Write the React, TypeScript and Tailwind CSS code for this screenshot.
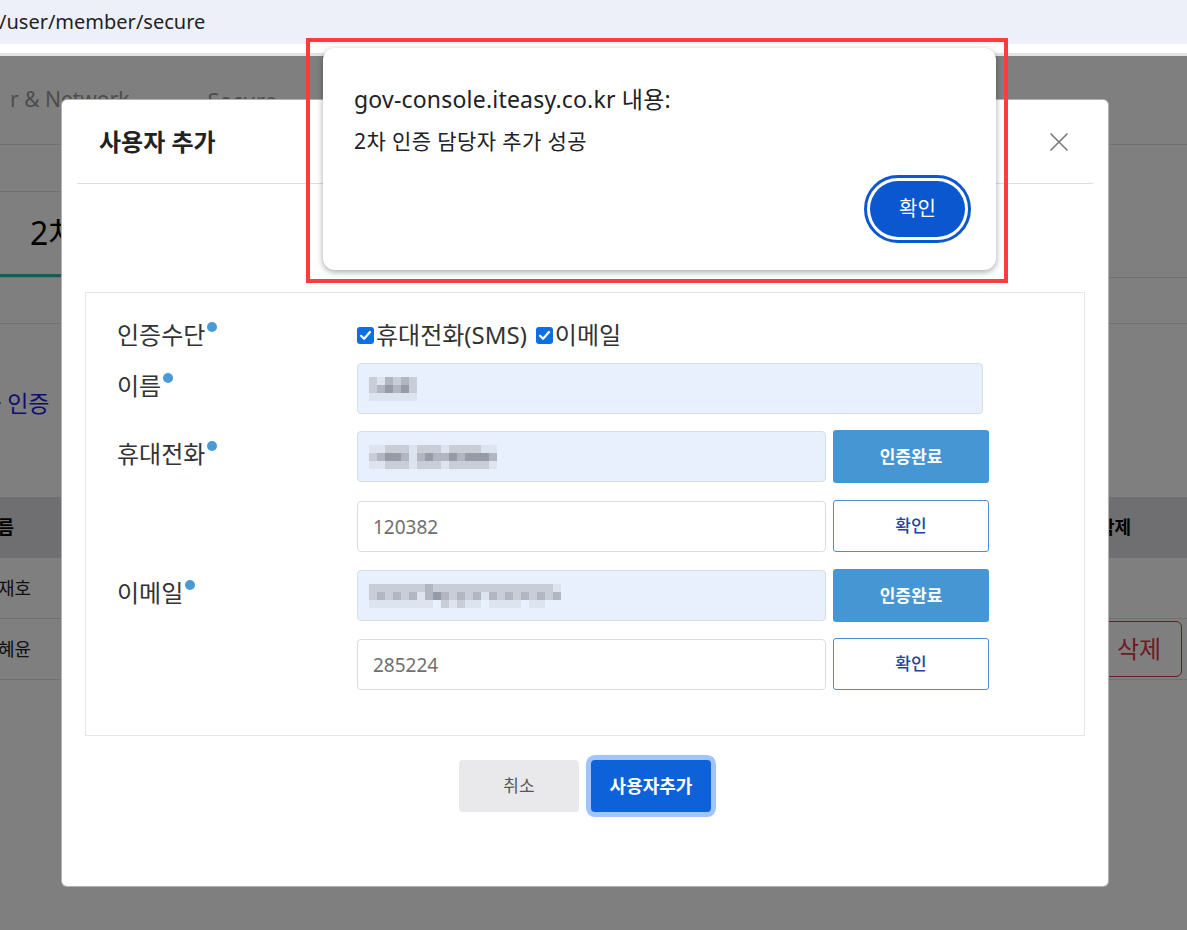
import React from "react";

const shade: Record<string, string> = {
  a: "bg-[#dde3ef]",
  b: "bg-[#c9cdd8]",
  c: "bg-[#b2b6c2]",
  d: "bg-[#979ba7]",
  " ": "bg-transparent",
};

// pixelated (censored) text in the filled fields
function Mosaic({ rows, cell = 8 }: { rows: string[]; cell?: number }) {
  return (
    <div className="flex flex-col">
      {rows.map((row, i) => (
        <div key={i} className="flex">
          {row.split("").map((ch, j) => (
            <div
              key={j}
              className={shade[ch]}
              style={{ width: cell, height: cell }}
            />
          ))}
        </div>
      ))}
    </div>
  );
}

function Label({ children, flush }: { children: React.ReactNode; flush?: boolean }) {
  return (
    <div
      className={`w-[240px] shrink-0 text-[24px] leading-[30px] text-[#333] ${
        flush ? "" : "pt-[8px]"
      }`}
    >
      {children}
      <span className="inline-block w-[10px] h-[10px] rounded-full bg-[#4a9ad8] align-top mt-[2px] ml-[2px]" />
    </div>
  );
}

function Check() {
  return (
    <span className="w-[17px] h-[17px] rounded-[3px] bg-[#0b6fe6] flex items-center justify-center">
      <svg width="13" height="13" viewBox="0 0 13 13" fill="none">
        <path d="M2 6.8L5.1 9.8L11 3" stroke="white" strokeWidth="2.2" strokeLinecap="round" strokeLinejoin="round" />
      </svg>
    </span>
  );
}

function FilledField({ rows, wide }: { rows: string[]; wide?: boolean }) {
  return (
    <div
      className={`${
        wide ? "w-[626px]" : "w-[469px]"
      } h-[51px] rounded-[4px] border border-[#d8dce3] bg-[#e8f0fe] flex items-center pl-[11px]`}
    >
      <Mosaic rows={rows} />
    </div>
  );
}

function CodeField({ value }: { value: string }) {
  return (
    <input
      readOnly
      value={value}
      className="w-[469px] h-[51px] rounded-[4px] border border-[#dcdcdc] bg-white px-[15px] text-[19px] text-[#6f6f6f] outline-none font-['Noto_Sans',sans-serif]"
    />
  );
}

function DoneButton() {
  return (
    <button className="w-[156px] h-[53px] ml-[7px] -mt-px rounded-[3px] bg-[#4596d3] text-white text-[17px] font-bold">
      인증완료
    </button>
  );
}

function ConfirmButton() {
  return (
    <button className="w-[156px] h-[52px] ml-[7px] -mt-px rounded-[3px] border border-[#4a8fd6] bg-white text-[#21469a] text-[17px] font-medium">
      확인
    </button>
  );
}

export default function App() {
  return (
    <div className="relative w-[1187px] h-[930px] overflow-hidden bg-white font-['Noto_Sans','Noto_Sans_CJK_KR',sans-serif]">
      {/* browser address bar */}
      <div className="h-[44px] bg-[#edf0f9] flex items-center text-[20px] text-[#1f1f1f]">
        <span className="-ml-px">/user/member/secure</span>
      </div>
      <div className="h-[9px] bg-white" />
      <div className="h-[3px] bg-[#e3e3e3]" />

      {/* page behind the modal */}
      <div className="relative h-[874px] bg-white">
        <div className="h-[89px] border-b border-[#e0e0e0] flex items-center text-[21px] text-[#9a9a9a]">
          <span className="ml-[10px]">r &amp; Network</span>
          <span className="ml-[78px] text-[22px]">Secure</span>
        </div>
        <div className="h-[47px] w-[600px] border-b border-[#e0e0e0]" />
        <div className="h-[86px] border-b border-[#e0e0e0] flex items-end">
          <div className="w-[260px] h-full border-b-[3px] border-[#35b3b3] flex items-center pl-[30px] text-[32px] text-black">
            2차 인증
          </div>
        </div>
        <div className="h-[46px] border-b border-[#e0e0e0]" />
        <div className="mt-[64px] text-[23px] leading-[30px] text-[#1f1fe0] -ml-[20px]">
          차 인증
        </div>
        <div className="mt-[79px]">
          <div className="h-[61px] bg-[#dedee2] border-b border-[#e0e0e0] flex items-center justify-between text-[18px] font-bold text-black">
            <span className="-ml-[19px]">이름</span>
            <span className="w-[91px] pl-[2px]">삭제</span>
          </div>
          <div className="h-[61px] border-b border-[#e0e0e0] flex items-center text-[18px] text-[#222]">
            <span className="-ml-[2px]">재호</span>
          </div>
          <div className="h-[61px] border-b border-[#e0e0e0] flex items-center justify-between text-[18px] text-[#222]">
            <span className="-ml-[2px]">혜윤</span>
            <button className="mr-[5px] w-[86px] h-[56px] rounded-[6px] border border-[#dc3545] text-[24px] text-[#dc3545] bg-white">
              삭제
            </button>
          </div>
        </div>

        <div className="absolute inset-0 bg-black/50" />

        {/* modal */}
        <div className="absolute left-[61px] top-[43px] w-[1048px] h-[788px] rounded-[6px] border border-black/30 bg-white">
          <div className="mx-[15px] h-[84px] border-b border-[#dedede] flex items-center justify-between pl-[22px] pr-[24px]">
            <h2 className="text-[24px] font-semibold text-[#222]">사용자 추가</h2>
            <svg width="20" height="20" viewBox="0 0 20 20" fill="none">
              <path d="M1.5 1.5L18.5 18.5M18.5 1.5L1.5 18.5" stroke="#777" strokeWidth="1.6" />
            </svg>
          </div>

          <div className="mx-[23px] mt-[108px] h-[444px] border border-[#e6e6e6] pt-[27px] pl-[31px] flex flex-col">
            <div className="flex">
              <Label flush>인증수단</Label>
              <div className="flex items-center text-[24px] leading-[30px] text-[#333]">
                <Check />
                <span className="ml-[2px]">휴대전화(SMS)</span>
                <span className="ml-[9px]">
                  <Check />
                </span>
                <span className="ml-[2px]">이메일</span>
              </div>
            </div>

            <div className="flex mt-[13px]">
              <Label>이름</Label>
              <FilledField wide rows={["bacbcb ", "bcdcdb ", "aaaaaa "]} />
            </div>

            <div className="flex mt-[17px]">
              <Label>휴대전화</Label>
              <div className="flex flex-col">
                <div className="flex">
                  <FilledField
                    rows={[
                      "aabbbabbbabbbbaa",
                      "bcddcacdccdcdddc",
                      "aabbbabbbabbbbba",
                    ]}
                  />
                  <DoneButton />
                </div>
                <div className="flex mt-[18px]">
                  <CodeField value="120382" />
                  <ConfirmButton />
                </div>
              </div>
            </div>

            <div className="flex mt-[18px]">
              <Label>이메일</Label>
              <div className="flex flex-col">
                <div className="flex">
                  <FilledField
                    rows={[
                      "bbbbbbbcbbbbbbbbbbbbbbba ",
                      "bcbcbcacdcbcbcacbcbcbcbc ",
                      "aaaaaaaa babaa aaaa aa   ",
                    ]}
                  />
                  <DoneButton />
                </div>
                <div className="flex mt-[17px]">
                  <CodeField value="285224" />
                  <ConfirmButton />
                </div>
              </div>
            </div>
          </div>

          <div className="mt-[24px] flex justify-center gap-[12px]">
            <button className="w-[120px] h-[52px] rounded-[4px] bg-[#e9e9ec] text-[#555] text-[17px]">
              취소
            </button>
            <button className="w-[120px] h-[52px] rounded-[4px] bg-[#0d62d9] text-white text-[18px] font-bold ring-[5px] ring-[#a0c4fb]">
              사용자추가
            </button>
          </div>
        </div>
      </div>

      {/* browser alert with its red highlight frame */}
      <div className="absolute left-[306px] top-[38px] w-[702px] h-[245px] border-[4px] border-[#ff3b3b]" />
      <div className="absolute left-[323px] top-[48px] w-[673px] h-[222px] rounded-[12px] bg-white shadow-[0_2px_6px_rgba(0,0,0,0.35)] flex flex-col pl-[31px] pr-[25px] pt-[36px]">
        <div className="text-[23px] leading-[30px] tracking-[0.2px] text-[#202124]">gov-console.iteasy.co.kr 내용:</div>
        <div className="mt-[14px] text-[21px] leading-[26px] tracking-[0.4px] text-[#202124]">2차 인증 담당자 추가 성공</div>
        <div className="mt-[21px] flex justify-end">
          <div className="rounded-full border-[3px] border-[#0b57d0] p-[3px] bg-white">
            <button className="w-[95px] h-[56px] rounded-full bg-[#0b57d0] text-white text-[20px]">
              확인
            </button>
          </div>
        </div>
      </div>
    </div>
  );
}
